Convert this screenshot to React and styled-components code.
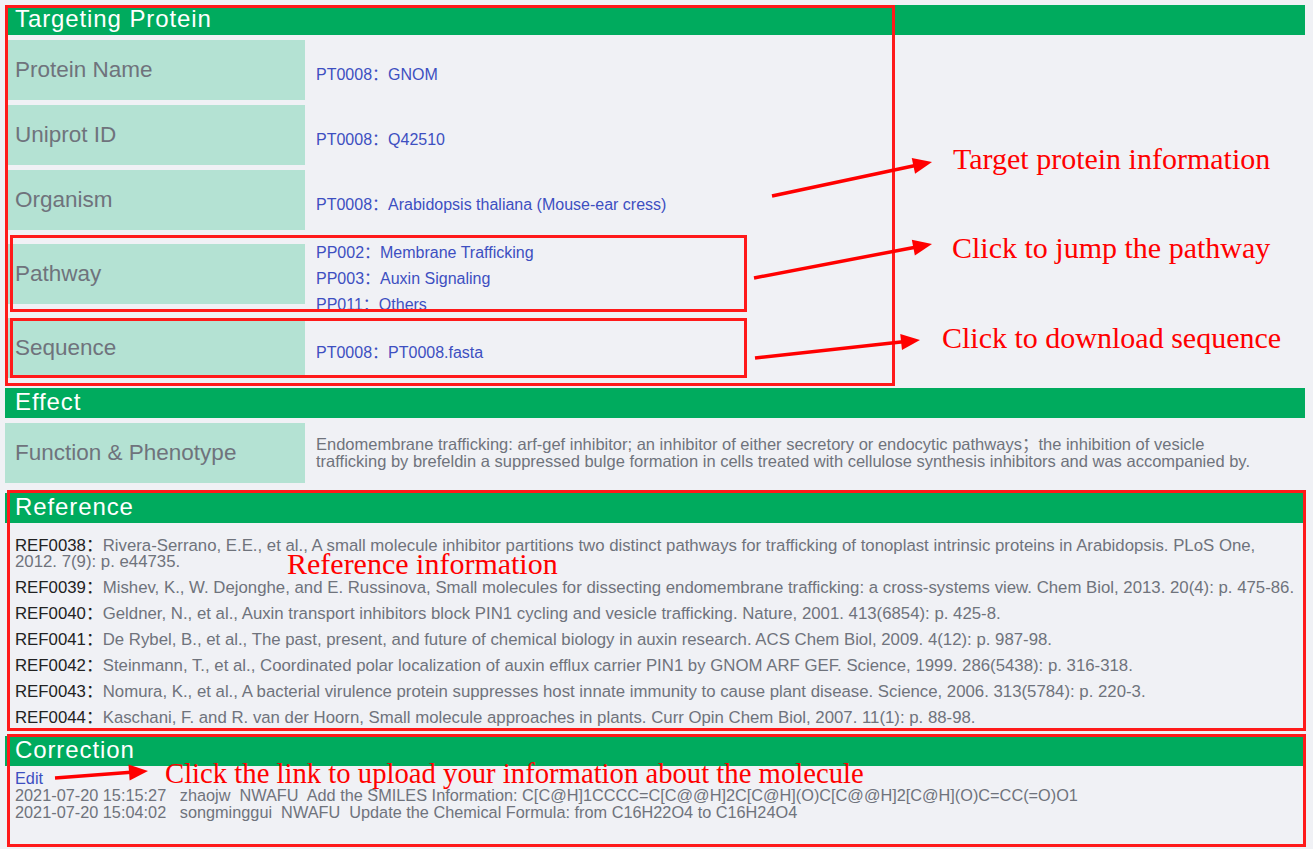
import styled, { createGlobalStyle } from "styled-components";

const Global = createGlobalStyle`
  body {
    margin: 0;
    background: #f0f1f5;
    font-family: "Liberation Sans", "Noto Sans CJK SC", sans-serif;
  }
`;

const Page = styled.div`
  position: relative;
  box-sizing: border-box;
  width: 1313px;
  min-height: 849px;
  padding: 5px 8px 0 5px;
`;

const Section = styled.section`
  margin-bottom: 10px;
`;

const Bar = styled.h2`
  margin: 0;
  height: 30px;
  line-height: 28px;
  padding-left: 10px;
  background: #00ab5e;
  color: #fff;
  font-size: 24px;
  font-weight: normal;
  letter-spacing: 0.9px;
`;

const Row = styled.div`
  display: flex;
  align-items: center;
  margin-top: 5px;
`;

const Label = styled.div`
  flex: none;
  width: 290px;
  height: 60px;
  padding-left: 10px;
  display: flex;
  align-items: center;
  background: #b4e2d3;
  color: #6f737c;
  font-size: 22.5px;
`;

const Value = styled.div`
  padding: 10px 24px 0 11px;
  font-size: 16px;
  line-height: 20px;
  color: #6f737c;
`;

const Description = styled.div`
  padding: 0 35px 0 11px;
  font-size: 16.5px;
  line-height: 17px;
  color: #6f737c;
`;

const PathValue = styled.div`
  box-sizing: border-box;
  height: 78px;
  padding: 5px 0 0 11px;
  line-height: 26px;
  font-size: 16px;
`;

const Link = styled.a`
  display: block;
  color: #3d4fc1;
  text-decoration: none;
`;

const RefList = styled.div`
  padding: 15px 5px 0 10px;
`;

const RefItem = styled.p`
  margin: 0 0 10px;
  font-size: 16.8px;
  line-height: 16px;
  color: #6f737c;
`;

const RefCode = styled.span`
  color: #222;
`;

const Log = styled.div`
  padding: 4px 10px 0;
  font-size: 16.3px;
  line-height: 17px;
  color: #6f737c;
  white-space: pre;
`;

const EditLink = styled.a`
  color: #3d4fc1;
  text-decoration: none;
`;

const Frame = styled.div`
  position: absolute;
  box-sizing: border-box;
  border: 3px solid #ff1a1a;
  pointer-events: none;
`;

const Note = styled.span`
  position: absolute;
  font-family: "Liberation Serif", serif;
  font-size: ${(p) => p.$size || 30}px;
  line-height: 34px;
  color: #ff0000;
  white-space: nowrap;
`;

const Arrows = styled.svg`
  position: absolute;
  left: 0;
  top: 0;
  pointer-events: none;
`;

const rows = [
  ["Protein Name", "PT0008：GNOM"],
  ["Uniprot ID", "PT0008：Q42510"],
  ["Organism", "PT0008：Arabidopsis thaliana (Mouse-ear cress)"],
];

const pathways = [
  "PP002：Membrane Trafficking",
  "PP003：Auxin Signaling",
  "PP011：Others",
];

const refs = [
  ["REF0038", "Rivera-Serrano, E.E., et al., A small molecule inhibitor partitions two distinct pathways for trafficking of tonoplast intrinsic proteins in Arabidopsis. PLoS One, 2012. 7(9): p. e44735."],
  ["REF0039", "Mishev, K., W. Dejonghe, and E. Russinova, Small molecules for dissecting endomembrane trafficking: a cross-systems view. Chem Biol, 2013. 20(4): p. 475-86."],
  ["REF0040", "Geldner, N., et al., Auxin transport inhibitors block PIN1 cycling and vesicle trafficking. Nature, 2001. 413(6854): p. 425-8."],
  ["REF0041", "De Rybel, B., et al., The past, present, and future of chemical biology in auxin research. ACS Chem Biol, 2009. 4(12): p. 987-98."],
  ["REF0042", "Steinmann, T., et al., Coordinated polar localization of auxin efflux carrier PIN1 by GNOM ARF GEF. Science, 1999. 286(5438): p. 316-318."],
  ["REF0043", "Nomura, K., et al., A bacterial virulence protein suppresses host innate immunity to cause plant disease. Science, 2006. 313(5784): p. 220-3."],
  ["REF0044", "Kaschani, F. and R. van der Hoorn, Small molecule approaches in plants. Curr Opin Chem Biol, 2007. 11(1): p. 88-98."],
];

// annotation arrows: tail -> tip
const arrows = [
  [772, 196, 932, 162],
  [754, 278, 932, 244],
  [755, 358, 920, 340],
  [55, 778, 148, 771],
];

const notes = [
  { text: "Target protein information", left: 953, top: 142 },
  { text: "Click to jump the pathway", left: 952, top: 231 },
  { text: "Click to download sequence", left: 942, top: 321 },
  { text: "Reference information", left: 287, top: 547 },
  { text: "Click the link to upload your information about the molecule", left: 165, top: 756, size: 28.7 },
];

const frames = [
  { left: 5, top: 5, width: 890, height: 381 },
  { left: 10, top: 235, width: 737, height: 77 },
  { left: 10, top: 318, width: 737, height: 60 },
  { left: 7, top: 490, width: 1299, height: 241 },
  { left: 7, top: 734, width: 1299, height: 113 },
];

const Arrow = ({ x1, y1, x2, y2 }) => {
  const a = Math.atan2(y2 - y1, x2 - x1);
  const len = 19;
  const half = 8;
  const bx = x2 - len * Math.cos(a);
  const by = y2 - len * Math.sin(a);
  const px = -Math.sin(a) * half;
  const py = Math.cos(a) * half;
  return (
    <g>
      <line x1={x1} y1={y1} x2={bx + 2 * Math.cos(a)} y2={by + 2 * Math.sin(a)} stroke="#ff0000" strokeWidth="3.5" />
      <polygon points={`${x2},${y2} ${bx + px},${by + py} ${bx - px},${by - py}`} fill="#ff0000" />
    </g>
  );
};

const App = () => {
  return (
    <>
      <Global />
      <Page>
        <Section>
          <Bar>Targeting Protein</Bar>
          {rows.map(([k, v]) => (
            <Row key={k}>
              <Label>{k}</Label>
              <Value>
                <Link href="#">{v}</Link>
              </Value>
            </Row>
          ))}
          <Row>
            <Label>Pathway</Label>
            <PathValue>
              {pathways.map((p) => (
                <Link key={p} href="#">{p}</Link>
              ))}
            </PathValue>
          </Row>
          <Row>
            <Label>Sequence</Label>
            <Value>
              <Link href="#">PT0008：PT0008.fasta</Link>
            </Value>
          </Row>
        </Section>

        <Section>
          <Bar>Effect</Bar>
          <Row>
            <Label>Function &amp; Phenotype</Label>
            <Description>
              Endomembrane trafficking: arf-gef inhibitor; an inhibitor of either secretory or endocytic pathways；the inhibition of vesicle trafficking by brefeldin a suppressed bulge formation in cells treated with cellulose synthesis inhibitors and was accompanied by.
            </Description>
          </Row>
        </Section>

        <Section>
          <Bar>Reference</Bar>
          <RefList>
            {refs.map(([code, text]) => (
              <RefItem key={code}>
                <RefCode>{code}：</RefCode>
                {text}
              </RefItem>
            ))}
          </RefList>
        </Section>

        <Section>
          <Bar>Correction</Bar>
          <Log>
            <EditLink href="#">Edit</EditLink>
            {"\n2021-07-20 15:15:27   zhaojw  NWAFU  Add the SMILES Information: C[C@H]1CCCC=C[C@@H]2C[C@H](O)C[C@@H]2[C@H](O)C=CC(=O)O1"}
            {"\n2021-07-20 15:04:02   songminggui  NWAFU  Update the Chemical Formula: from C16H22O4 to C16H24O4"}
          </Log>
        </Section>

        {frames.map((f, i) => (
          <Frame key={i} style={f} />
        ))}

        <Arrows width="1313" height="849">
          {arrows.map(([x1, y1, x2, y2], i) => (
            <Arrow key={i} x1={x1} y1={y1} x2={x2} y2={y2} />
          ))}
        </Arrows>

        {notes.map((n) => (
          <Note key={n.text} $size={n.size} style={{ left: n.left, top: n.top }}>
            {n.text}
          </Note>
        ))}
      </Page>
    </>
  );
};

export default App;
